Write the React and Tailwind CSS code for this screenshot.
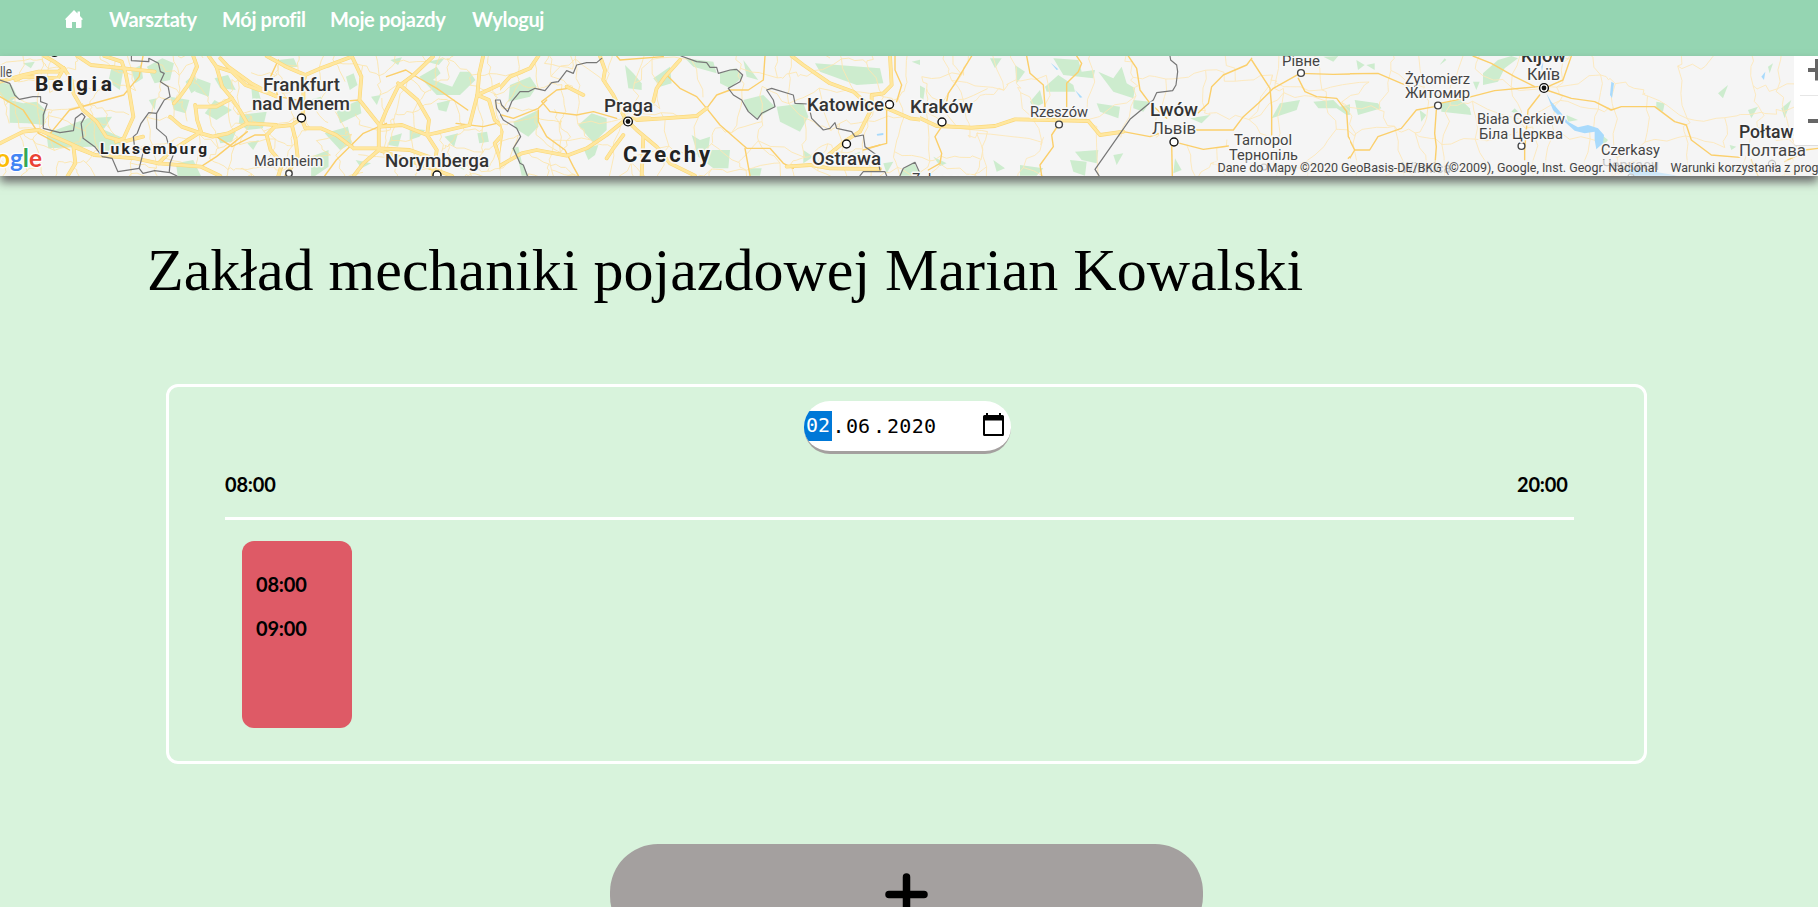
import React from 'react';

const NAV = [
  { label: 'Warsztaty', width: 88 },
  { label: 'Mój profil', width: 83 },
  { label: 'Moje pojazdy', width: 117 },
  { label: 'Wyloguj', width: 70 },
];

/* Each map section has its own drawing grid, placed on the strip by a matrix. */
const SECTIONS = [
  {
    matrix: 'matrix(0.38651 0 0 0.33333 0 -56)',
    green: [
      'M25 300 60 310 95 305 118 330 115 375 70 370 25 368z',
      'M0 245 30 255 45 290 20 310 0 285z',
      'M120 400 215 360 260 385 330 420 320 440 230 440 125 445z',
      'M210 370 225 355 290 350 270 385 240 400z',
      'M290 195 320 205 310 270 280 245z',
      'M380 200 420 175 450 190 440 240 400 250z',
      'M440 290 490 300 480 340 450 330z',
      'M510 235 545 250 540 290 505 275z',
      'M555 235 590 225 610 270 570 265z',
      'M555 300 600 330 560 360 530 340z',
      'M620 345 690 335 680 385 640 390 618 370z',
      'M650 260 665 255 675 300 655 320z',
      'M560 400 610 395 600 425 570 430z',
      'M870 330 930 300 935 340 880 370z',
      'M840 400 900 380 910 430 880 450z',
      'M805 470 850 450 850 500 815 528 805 528z',
      'M1085 230 1130 200 1140 220 1120 240 1170 260 1190 215 1215 215 1230 240 1190 285 1130 285z',
      'M1105 185 1150 175 1135 195z',
      'M1060 385 1100 390 1085 410 1060 420z',
      'M1320 245 1385 235 1370 265 1330 285 1310 275z',
      'M1350 310 1395 340 1395 380 1370 400 1340 370z',
      'M1340 420 1370 460 1380 528 1360 528 1345 480z',
      'M1490 370 1568 345 1568 410 1520 420z',
      'M1170 490 1220 480 1200 510z',
      'M245 435 290 440 270 470z',
      'M455 490 500 480 520 528 460 528z',
      'M1430 180 1470 185 1440 200z',
      'M720 180 760 175 770 200 735 205z',
      'M920 480 960 490 935 505z',
      'M340 210 365 195 370 235 350 250z',
      'M480 245 500 225 520 260 495 280z',
      'M800 300 830 290 845 320 815 330z',
      'M895 230 915 220 925 255 905 270z',
      'M960 290 985 285 975 315z',
      'M1010 180 1040 172 1030 195z',
      'M1130 310 1165 300 1155 335 1135 330z',
      'M1010 410 1040 400 1030 440 1005 435z',
      'M1235 400 1260 395 1265 425 1240 430z',
      'M1150 410 1185 400 1175 440z',
      'M640 430 670 420 655 450z',
      'M385 300 405 295 400 330z',
      'M60 190 90 185 80 205z',
    ],
    major: [
      'M115 168 140 185 165 205 185 240 190 280 215 330 250 365 275 410 320 425 370 410',
      'M0 245 60 225 100 215 150 215 165 205M200 168 235 195 320 205 400 215',
      'M270 168 315 185 325 220 335 280 345 350 320 415 300 425',
      'M165 205 150 235 60 230 40 240',
      'M0 430 60 395 100 390 180 430 245 465 350 475 410 490 520 500 570 528',
      'M245 465 190 440 195 490 175 528M410 490 440 455 520 395 510 360 505 315',
      'M500 168 510 200 490 250 465 290 450 310M540 168 560 200 575 260 600 295 560 320 510 320',
      'M560 200 600 215 635 255 720 290',
      'M600 295 620 330 640 370 715 375 690 405 700 450 730 490 720 528',
      'M440 350 470 380 520 400 550 410 590 400 640 370',
      'M570 175 590 200 650 250 715 290M690 168 740 200 790 225 830 205 910 170',
      'M790 225 785 250 785 330 780 355M910 168 935 230 930 300 985 380 1040 375 1105 405 1110 360 1080 300 1030 250',
      'M780 355 755 375 715 380M780 355 790 385 830 385 870 405 915 445 980 445 1060 450 1120 475',
      'M755 375 765 420 770 470 740 528M1120 170 1070 225 1030 260 1000 330 980 385 980 450 940 490 915 528',
      'M1250 168 1240 220 1235 285 1300 250 1400 168M1235 285 1215 375 1105 405 1130 450 1120 528',
      'M1235 285 1265 300 1280 360 1310 390 1280 430 1295 480 1300 528',
      'M1300 475 1350 458 1400 458 1470 465 1530 430 1568 410',
      'M980 450 1080 490 1170 528',
    ],
    road: [
      'M640 395 560 470 520 500M840 528 870 480 940 400 1000 370M1000 230 1050 210 1070 225 1130 265 1210 330',
      'M1300 330 1330 355 1385 330 1410 285 1460 255 1540 225M1390 320 1470 350 1568 345M1390 320 1430 390 1440 455',
      'M1460 250 1500 285M1540 180 1568 220M1180 370 1250 380 1285 370M1470 465 1500 528',
      'M370 168 360 230 320 285 180 330 130 400M0 290 60 330 100 400 180 450',
      'M560 410 600 440 660 405 690 405M720 180 700 230 720 290 820 310 930 300',
    ],
    border: [
      'M0 240 25 250 38 285 50 298 85 290 105 290 105 305 122 312 112 345 112 385 155 398 190 392 195 355 212 340 220 350 210 370 215 415 245 440 265 470 290 475 305 515 360 505',
      'M340 168 340 182 385 185 385 175 410 190 415 215 425 220 415 245 435 260 440 290 425 300 415 320 405 340 385 338 365 370 355 400 345 410 348 440 372 450 360 505 370 520 400 512 440 518 458 528',
      'M405 340 405 385 430 410 435 430 455 445 440 490 438 515',
      'M1568 170 1515 188 1480 220 1460 220 1440 245 1415 265 1385 265 1350 275 1330 285 1312 335 1295 300 1282 300 1285 325 1310 365 1340 400 1345 420 1330 445 1335 475 1355 490 1363 528',
    ],
  },
  {
    matrix: 'matrix(0.33333 0 0 0.33333 450 -16)',
    green: [
      'M0 110 40 90 75 105 80 150 45 175 0 155z',
      'M15 70 75 60 50 80 15 90z',
      'M180 135 240 110 260 140 240 170 175 185z',
      'M190 245 265 210 265 260 235 290 195 265z',
      'M385 255 425 220 470 235 470 270 430 310 410 285z',
      'M525 75 550 100 575 130 575 150 535 145z',
      'M610 115 660 80 665 130 630 140z',
      'M705 55 790 65 800 100 730 80z',
      'M810 100 855 85 878 110 840 145 810 130z',
      'M880 60 925 120 890 110z',
      'M880 180 940 165 975 200 920 235 890 210z',
      'M980 200 1060 190 1075 230 1050 275 990 245z',
      'M1095 70 1290 85 1300 130 1220 135 1110 95z',
      'M1385 65 1430 55 1410 75z',
      'M725 285 750 300 780 290 775 330 840 330 835 385 790 385 745 350z',
      'M185 325 205 320 215 365 235 407 215 407 205 360z',
      'M400 325 445 315 435 345 415 360z',
      'M895 385 935 385 930 407 900 407z',
      'M1190 350 1230 335 1220 380z',
      'M1300 370 1330 365 1310 400z',
      'M1355 390 1390 367 1410 400 1380 407 1350 407z',
      'M1060 330 1090 350 1060 370z',
    ],
    major: [
      'M100 48 82 110 95 170 55 210 45 290 30 340M265 48 240 85 180 110 140 155 95 170',
      'M120 165 130 215 155 275 145 340 145 407M0 260 55 255',
      'M450 48 465 90 460 120 490 165 525 235 560 270 620 320 660 370 735 407',
      'M690 60 645 110 620 145 610 185M560 240 640 235 740 228 770 205',
      'M525 240 470 285 410 325 350 347 260 330 215 340 145 380',
      'M525 240 550 235 600 235M520 285 490 325 470 355M580 290 575 407',
      'M1025 48 1060 75 1140 130 1210 155 1255 195 1310 205 1380 235 1500 250',
      'M1320 48 1325 135 1300 160 1265 165 1265 205 1230 275 1190 300 1135 345',
      'M1010 380 1080 375 1140 385 1290 387M350 140 400 165',
    ],
    road: [
      'M290 180 265 205 190 235 155 225M355 145 320 150 275 185 300 215 380 225 430 215 500 235',
      'M265 210 265 245 290 290 345 330 370 380 385 407M650 105 690 145 740 170 770 205 810 255 890 325 960 325 1000 370 1030 385',
      'M770 205 800 165 840 150 895 150 940 120 945 48M885 325 900 407',
      'M1335 48 1335 90 1355 135 1340 185M1310 205 1310 310 1250 325M1475 285 1470 340 1435 380 1435 407',
      'M500 48 510 60 640 50M1240 330 1290 315',
    ],
    border: [
      'M455 55 440 68 410 68 380 75 370 100 350 92 325 125 305 128 285 152 255 145 235 155 210 155 185 185 173 215 155 195 150 180 135 182 138 200 160 240 200 265 212 290 190 325 210 370 220 375 232 407',
      'M693 48 740 65 770 68 780 82 800 82 805 100 840 90 860 88 878 105 870 125 835 145 850 165 875 180 895 215 922 238 935 220 975 200 970 180 950 150 965 145 1030 165 1035 190 1075 192 1085 235 1120 270 1140 265 1155 248 1160 265 1205 275 1215 290 1240 285 1245 320 1280 345 1290 390',
      'M1230 407 1240 395 1305 395 1310 407M1350 407 1360 385 1395 367 1410 400',
    ],
    water: ['M1280 282 1300 279 1300 285 1282 287z'],
  },
  {
    matrix: 'matrix(0.33333 0 0 0.33333 900 -16)',
    green: [
      'M270 55 305 55 285 85z',
      'M345 75 375 95 350 130z',
      'M15 110 75 145 70 180 35 150z',
      'M460 55 535 60 545 95 585 90 580 115 490 105z',
      'M435 140 475 105 520 135 525 155 440 155z',
      'M390 185 420 150 430 190 400 205z',
      'M595 95 640 115 665 80 680 130 705 145 700 175 640 155z',
      'M590 190 660 200 655 235 600 215z',
      'M700 180 750 185 730 215 700 205z',
      'M870 235 930 225 905 250z',
      'M525 335 595 330 590 370 545 360z',
      'M510 360 560 365 555 407 520 395z',
      'M360 375 430 385 410 407 360 407z',
      'M0 310 50 305 40 330 0 335z',
      'M825 355 845 390 820 400z',
      'M640 345 670 340 650 375z',
      'M1140 190 1200 180 1190 210 1115 235z',
      'M1240 185 1300 180 1320 200 1385 185 1385 220 1340 225 1310 205 1255 205z',
      'M1375 55 1395 65 1390 90z',
      'M1450 165 1500 150 1500 215 1455 190z',
      'M1270 50 1315 48 1300 65z',
      'M0 385 40 367 60 400 0 407z',
      'M280 360 315 385 290 395z',
      'M100 350 140 370 120 378z',
    ],
    major: [
      'M0 220 40 225 110 258 215 263 285 258 345 238 450 240 565 243 600 285 670 275',
    ],
    road: [
      'M215 48 165 130 145 160 135 210M380 48 390 100 430 135 435 200',
      'M530 48 545 70 535 95 500 130 500 200M685 48 710 85 720 150 750 190 800 235',
      'M475 255 455 285 460 320 420 375 425 407M670 275 750 290 820 265',
      'M125 260 105 290 125 340 120 370 85 390M840 310 910 328 985 318M815 310 817 407',
      'M895 218 925 190 935 140 970 105 1040 75 1055 55M880 270 1000 270 1030 230 1075 190 1120 145 1200 100',
      'M1055 60 1110 145 1115 200 1115 285M1200 100 1300 103 1435 100 1500 130M1195 115 1215 155 1250 170 1310 175 1340 215 1345 290 1370 330',
      'M1370 330 1410 330 1430 290 1500 275M1370 330 1345 355',
    ],
    border: [
      'M810 48 812 60 830 75 833 95 828 135 818 152 770 158 760 180 690 238 585 388 597 407',
      'M0 405 40 367 60 400',
    ],
    water: ['M452 68 475 88 470 90z', 'M525 150 547 172 540 173z'],
  },
  {
    matrix: 'matrix(0.33333 0 0 0.33333 1318 -16)',
    green: [
      'M20 50 65 52 40 65z',
      'M115 60 140 75 120 90z',
      'M145 75 170 70 170 90z',
      'M495 100 540 60 580 48 600 55 560 85 540 125 495 135z',
      'M465 125 485 125 475 150z',
      'M50 180 80 180 90 210 55 205z',
      'M110 180 180 190 190 205 120 225z',
      'M370 190 430 180 455 205 460 225 370 215z',
      'M305 210 325 225 310 245z',
      'M590 205 610 225 580 215z',
      'M745 225 780 240 750 245z',
      'M840 275 870 300 850 325z',
      'M1015 185 1040 190 1035 215 1015 205z',
      'M1200 160 1230 135 1215 175z',
      'M1290 210 1320 200 1300 235z',
      'M1390 205 1420 180 1400 235z',
      'M1350 80 1365 70 1355 100z',
      'M1235 315 1255 320 1240 330z',
      'M385 60 365 75 380 55z',
      'M1370 270 1395 260 1385 290z',
    ],
    major: [],
    road: [
      'M0 103 180 100 250 130 320 155M0 165 50 180 85 220 90 290 110 330 155 330 180 290 250 265 295 210 350 200',
      'M110 330 95 355M355 210 350 280 355 320 350 385M365 190 440 175 530 152 660 140',
      'M465 48 520 70 590 110 650 140M665 165 630 210 620 330 620 360M760 48 735 120 690 140',
      'M685 150 760 175 830 185 880 210 910 200 1010 200 1070 245 1105 255 1120 300 1180 345 1265 352',
      'M1400 365 1440 345 1460 330 1500 325M1300 360 1320 407',
    ],
    border: [],
    water: [
      'M685 160 700 185 730 220 750 245 780 262 810 255 840 265 858 285 855 310 835 328 830 300 830 275 800 280 770 272 740 245 705 210z',
      'M880 125 888 130 882 175 876 165z',
      'M668 70 676 70 672 95z',
      'M1330 110 1342 95 1338 120z',
      'M920 385 1010 395 1080 407 940 407z',
    ],
  },
];

/* Seeded generator, so the minor road mesh is the same at every render. */
function minorRoads(x0, x1, step, seed) {
  let s = seed;
  const rnd = () => {
    s = (s * 16807) % 2147483647;
    return s / 2147483647;
  };
  const cols = Math.ceil((x1 - x0) / step) + 1;
  const rows = Math.ceil(120 / step) + 2;
  const pts = [];
  for (let r = 0; r < rows; r++) {
    pts.push([]);
    for (let c = 0; c < cols; c++) {
      pts[r].push([x0 + c * step + (rnd() - 0.5) * step, (r - 0.4) * step + (rnd() - 0.5) * step]);
    }
  }
  let d = '';
  const link = (a, b) => {
    d += `M${a[0].toFixed(1)} ${a[1].toFixed(1)}`;
    for (let i = 1; i < 4; i++) {
      const t = i / 4;
      const x = a[0] + (b[0] - a[0]) * t + (rnd() - 0.5) * step * 0.22;
      const y = a[1] + (b[1] - a[1]) * t + (rnd() - 0.5) * step * 0.22;
      d += `L${x.toFixed(1)} ${y.toFixed(1)}`;
    }
    d += `L${b[0].toFixed(1)} ${b[1].toFixed(1)}`;
  };
  for (let r = 0; r < rows; r++) {
    for (let c = 0; c < cols; c++) {
      if (c + 1 < cols && rnd() < 0.72) link(pts[r][c], pts[r][c + 1]);
      if (r + 1 < rows && rnd() < 0.72) link(pts[r][c], pts[r + 1][c]);
    }
  }
  return d;
}

/* [text, left, baseline, width, size, weight, fill] */
const LABELS = [
  ['lle', 0, 21, 12, 14, 400, '#555'],
  ['Belgia', 35, 35, 77, 21, 700, '#222'],
  ['Frankfurt', 263, 35, 77, 17.5, 500, '#333'],
  ['nad Menem', 252, 54, 98, 17.5, 500, '#333'],
  ['Luksemburg', 100, 98, 107, 15.5, 700, '#222'],
  ['Mannheim', 254, 110, 69, 14.5, 400, '#444'],
  ['Norymberga', 385, 111, 104, 17.5, 500, '#333'],
  ['Praga', 604, 56, 49, 17.5, 500, '#333'],
  ['Czechy', 623, 106, 87, 22, 700, '#222'],
  ['Katowice', 807, 55, 77, 17.5, 500, '#333'],
  ['Ostrawa', 812, 109, 69, 17.5, 500, '#333'],
  ['Zakopane', 912, 128, 62, 14.5, 400, '#444'],
  ['Kraków', 910, 57, 63, 17.5, 500, '#333'],
  ['Rzeszów', 1030, 61, 58, 14.5, 400, '#444'],
  ['Lwów', 1150, 60, 48, 17.5, 500, '#333'],
  ['Львів', 1152, 78, 44, 16, 400, '#444'],
  ['Рівне', 1282, 9.5, 38, 14.5, 400, '#444'],
  ['Tarnopol', 1234, 89, 58, 14.5, 400, '#444'],
  ['Тернопіль', 1229, 103.5, 69, 14.5, 400, '#444'],
  ['Żytomierz', 1405, 28, 65, 14.5, 400, '#444'],
  ['Житомир', 1405, 42, 65, 14.5, 400, '#444'],
  ['Kijów', 1521, 5.5, 45, 17.5, 500, '#333'],
  ['Київ', 1527, 24, 33, 16, 400, '#444'],
  ['Biała Cerkiew', 1477, 68, 88, 14.5, 400, '#444'],
  ['Біла Церква', 1479, 82.5, 84, 14.5, 400, '#444'],
  ['Czerkasy', 1601, 99, 59, 14.5, 400, '#444'],
  ['Połtawa', 1739, 82, 64, 17.5, 500, '#333'],
  ['Полтава', 1739, 100, 67, 16, 400, '#444'],
];

/* [x, y, radius] */
const TOWNS = [
  [301.5, 62, 4],
  [289, 117.5, 3.2],
  [437, 119, 4],
  [889.5, 48.5, 4],
  [846.5, 88, 4],
  [942, 66, 4],
  [1059, 68.5, 3.4],
  [1174, 86, 4],
  [1301, 17, 3.4],
  [1438, 49.5, 3.4],
  [1521.5, 90, 3.4],
];

const CAPITALS = [
  [54.5, -4],
  [628, 65.5],
  [1544, 32],
];

function MapStrip() {
  return (
    <div className="h-[120px] w-full shrink-0 overflow-hidden bg-[#f5f5f5]">
      <svg width="1818" height="120" viewBox="0 0 1818 120" className="block">
        <defs>
          <clipPath id="sec0"><rect x="0" y="0" width="500" height="120" /></clipPath>
          <clipPath id="sec1"><rect x="500" y="0" width="420" height="120" /></clipPath>
          <clipPath id="sec2"><rect x="920" y="0" width="430" height="120" /></clipPath>
          <clipPath id="sec3"><rect x="1350" y="0" width="468" height="120" /></clipPath>
        </defs>
        {SECTIONS.map((sec, i) => (
          <g key={i} clipPath={`url(#sec${i})`}>
            <g transform={sec.matrix} fill="#cdecce">
              {sec.green.map((d) => <path key={d} d={d} />)}
            </g>
          </g>
        ))}
        <path d={minorRoads(0, 560, 19, 4211)} fill="none" stroke="#fde3a3" strokeWidth="0.8" />
        <path d={minorRoads(560, 960, 26, 977)} fill="none" stroke="#fde6b2" strokeWidth="0.9" />
        <path d={minorRoads(960, 1818, 33, 3313)} fill="none" stroke="#fde8ba" strokeWidth="0.9" />
        {SECTIONS.map((sec, i) => (
          <g key={i} clipPath={`url(#sec${i})`}>
            <g transform={sec.matrix} fill="none" strokeLinejoin="round" strokeLinecap="round">
              {(sec.water || []).map((d) => <path key={d} d={d} fill="#a8dafc" />)}
              {sec.road.map((d) => (
                <path key={d} d={d} stroke="#fbcf6b" strokeWidth="1.4" vectorEffect="non-scaling-stroke" />
              ))}
              {sec.major.map((d) => (
                <path key={d} d={d} stroke="#fbd777" strokeWidth="3.8" vectorEffect="non-scaling-stroke" />
              ))}
              {sec.major.map((d) => (
                <path key={`${d}f`} d={d} stroke="#ffe79f" strokeWidth="2.7" vectorEffect="non-scaling-stroke" />
              ))}
              {sec.border.map((d) => (
                <path key={d} d={d} stroke="#777" strokeWidth="1.2" vectorEffect="non-scaling-stroke" />
              ))}
            </g>
          </g>
        ))}
        {TOWNS.map(([x, y, r]) => (
          <circle key={x} cx={x} cy={y} r={r} fill="#fff" stroke={r > 3.5 ? '#111' : '#444'} strokeWidth="1.4" />
        ))}
        {CAPITALS.map(([x, y]) => (
          <g key={x}>
            <circle cx={x} cy={y} r="4.4" fill="#fff" stroke="#111" strokeWidth="1.4" />
            <circle cx={x} cy={y} r="2.4" fill="#111" />
          </g>
        ))}
        <g fontFamily="Roboto, sans-serif" stroke="#f8f8f8" strokeWidth="3" strokeLinejoin="round" paintOrder="stroke">
          {LABELS.map(([text, x, y, w, size, weight, fill]) => (
            <text
              key={text}
              x={x}
              y={y}
              textLength={w}
              lengthAdjust={weight === 700 ? 'spacing' : 'spacingAndGlyphs'}
              fontSize={size}
              fontWeight={weight}
              fill={fill}
            >
              {text}
            </text>
          ))}
        </g>
        <g fontFamily="Roboto, sans-serif" fontSize="14.5" fill="#999">
          <text x="1401" y="117" textLength="50" lengthAdjust="spacingAndGlyphs">Winnica</text>
          <text x="1602" y="114" textLength="57" lengthAdjust="spacingAndGlyphs">Черкаси</text>
        </g>
        <g fill="none" stroke="#999" strokeWidth="1.2">
          <circle cx="1264" cy="111" r="3" />
          <circle cx="1772" cy="108" r="3.6" />
          <circle cx="1631" cy="121" r="3" />
        </g>
        <rect x="1214" y="104" width="604" height="16" fill="#f5f5f5" opacity="0.5" />
        <g fontFamily="Roboto, sans-serif" fontSize="13" fill="#444">
          <text x="1217.5" y="116" textLength="440" lengthAdjust="spacingAndGlyphs">
            Dane do Mapy ©2020 GeoBasis-DE/BKG (©2009), Google, Inst. Geogr. Nacional
          </text>
          <text x="1670.5" y="116" textLength="148" lengthAdjust="spacingAndGlyphs">Warunki korzystania z prog</text>
        </g>
        <g
          fontFamily="Lato, sans-serif"
          fontSize="24"
          fontWeight="700"
          stroke="#fff"
          strokeWidth="2.5"
          strokeLinejoin="round"
          paintOrder="stroke"
        >
          <text x="-4" y="111" textLength="46" lengthAdjust="spacingAndGlyphs">
            <tspan fill="#fbbc05">o</tspan>
            <tspan fill="#4285f4">g</tspan>
            <tspan fill="#34a853">l</tspan>
            <tspan fill="#ea4335">e</tspan>
          </text>
        </g>
        <rect x="1794" y="-10" width="40" height="100" rx="2" fill="#ddd" />
        <rect x="1794" y="-10" width="40" height="99" rx="2" fill="#fff" />
        <path d="M1800 39.500H1818" stroke="#e6e6e6" />
        <path d="M1808 14H1824M1817 3V24.500M1808 65H1824" stroke="#666" strokeWidth="4" />
      </svg>
    </div>
  );
}

function Time({ children }) {
  return (
    <span className="block w-[51px] text-[20px] leading-[22px] font-bold tracking-[-0.2px] text-black">
      {children}
    </span>
  );
}

function DateField() {
  return (
    <div className="flex h-[53px] w-[207px] items-center overflow-hidden rounded-[26px] border-b-[3px] border-[#a4a09f] bg-white font-['DejaVu_Sans_Mono',monospace] text-[20px] leading-[29px] text-black">
      <span className="h-[30px] w-[28px] bg-[#0078d7] pl-[2px] text-white">02</span>
      <span className="w-[13px] text-center">.</span>
      <span className="w-[27px] pl-px">06</span>
      <span className="w-[14px] text-center">.</span>
      <span className="w-[53px] pl-px tracking-[0.3px]">2020</span>
      <svg viewBox="0 0 21 24" className="mt-[-2px] mr-[7px] ml-auto h-[24px] w-[21px]">
        <path d="M3 0h2v2h11V0h2v2h1.500q1.500 0 1.500 1.500v18q0 1.500-1.500 1.500h-18Q0 23 0 21.500v-18Q0 2 1.500 2H3zM2 7.500V21h17V7.500z" fill="#000" fillRule="evenodd" />
      </svg>
    </div>
  );
}

export default function App() {
  return (
    <div className="flex h-[907px] w-[1818px] flex-col overflow-hidden bg-[#d8f3dc] font-[Lato,'Open_Sans',sans-serif]">
      <header className="flex h-[56px] shrink-0 items-start bg-[#95d5b2] pt-[6px] pl-[65px] text-[20px] leading-[26px] font-bold tracking-[-0.35px] text-white">
        <svg viewBox="0 0 18 18" className="mt-[4px] mr-[26px] h-[18px] w-[18px]" fill="#fff">
          <path d="M9 0 12.500 3.500V1.500H15V6L18 9.300 16.500 10V17q0 1-1 1H11V12H7v6H2q-1 0-1-1V10L0 9.300z" />
        </svg>
        <nav className="flex gap-[25px]">
          {NAV.map((item) => (
            <a key={item.label} className="block whitespace-nowrap" style={{ width: item.width }}>
              {item.label}
            </a>
          ))}
        </nav>
      </header>
      <div className="relative z-10 shadow-[0_6px_9px_0_#6a6a6a]">
        <MapStrip />
      </div>
      <main className="flex flex-col">
        <h1 className="mt-[60px] ml-[147px] font-['Liberation_Serif',serif] text-[60px] leading-[68px] whitespace-nowrap text-black">
          Zakład mechaniki pojazdowej Marian Kowalski
        </h1>
        <section className="mt-[80px] ml-[166px] flex h-[380px] w-[1481px] flex-col rounded-[12px] border-[3px] border-white px-[56px] pt-[14px]">
          <div className="flex justify-center pl-[2px]">
            <DateField />
          </div>
          <div className="mt-[19px] flex justify-between pr-[20px]">
            <Time>08:00</Time>
            <Time>20:00</Time>
          </div>
          <div className="mt-[22px] h-[3px] w-[1349px] bg-white" />
          <div className="mt-[21px] ml-[17px] flex h-[187px] w-[110px] flex-col gap-[22px] rounded-[12px] bg-[#de5a66] pt-[32px] pl-[14px]">
            <Time>08:00</Time>
            <Time>09:00</Time>
          </div>
        </section>
        <button className="mt-[80px] ml-[610px] flex h-[100px] w-[593px] shrink-0 items-center justify-center rounded-[48px] bg-[#a4a09f]">
          <svg viewBox="0 0 43 43" className="h-[43px] w-[43px]">
            <path d="M21.500 4V39M4 21.500H39" stroke="#000" strokeWidth="7.500" strokeLinecap="round" />
          </svg>
        </button>
      </main>
    </div>
  );
}
